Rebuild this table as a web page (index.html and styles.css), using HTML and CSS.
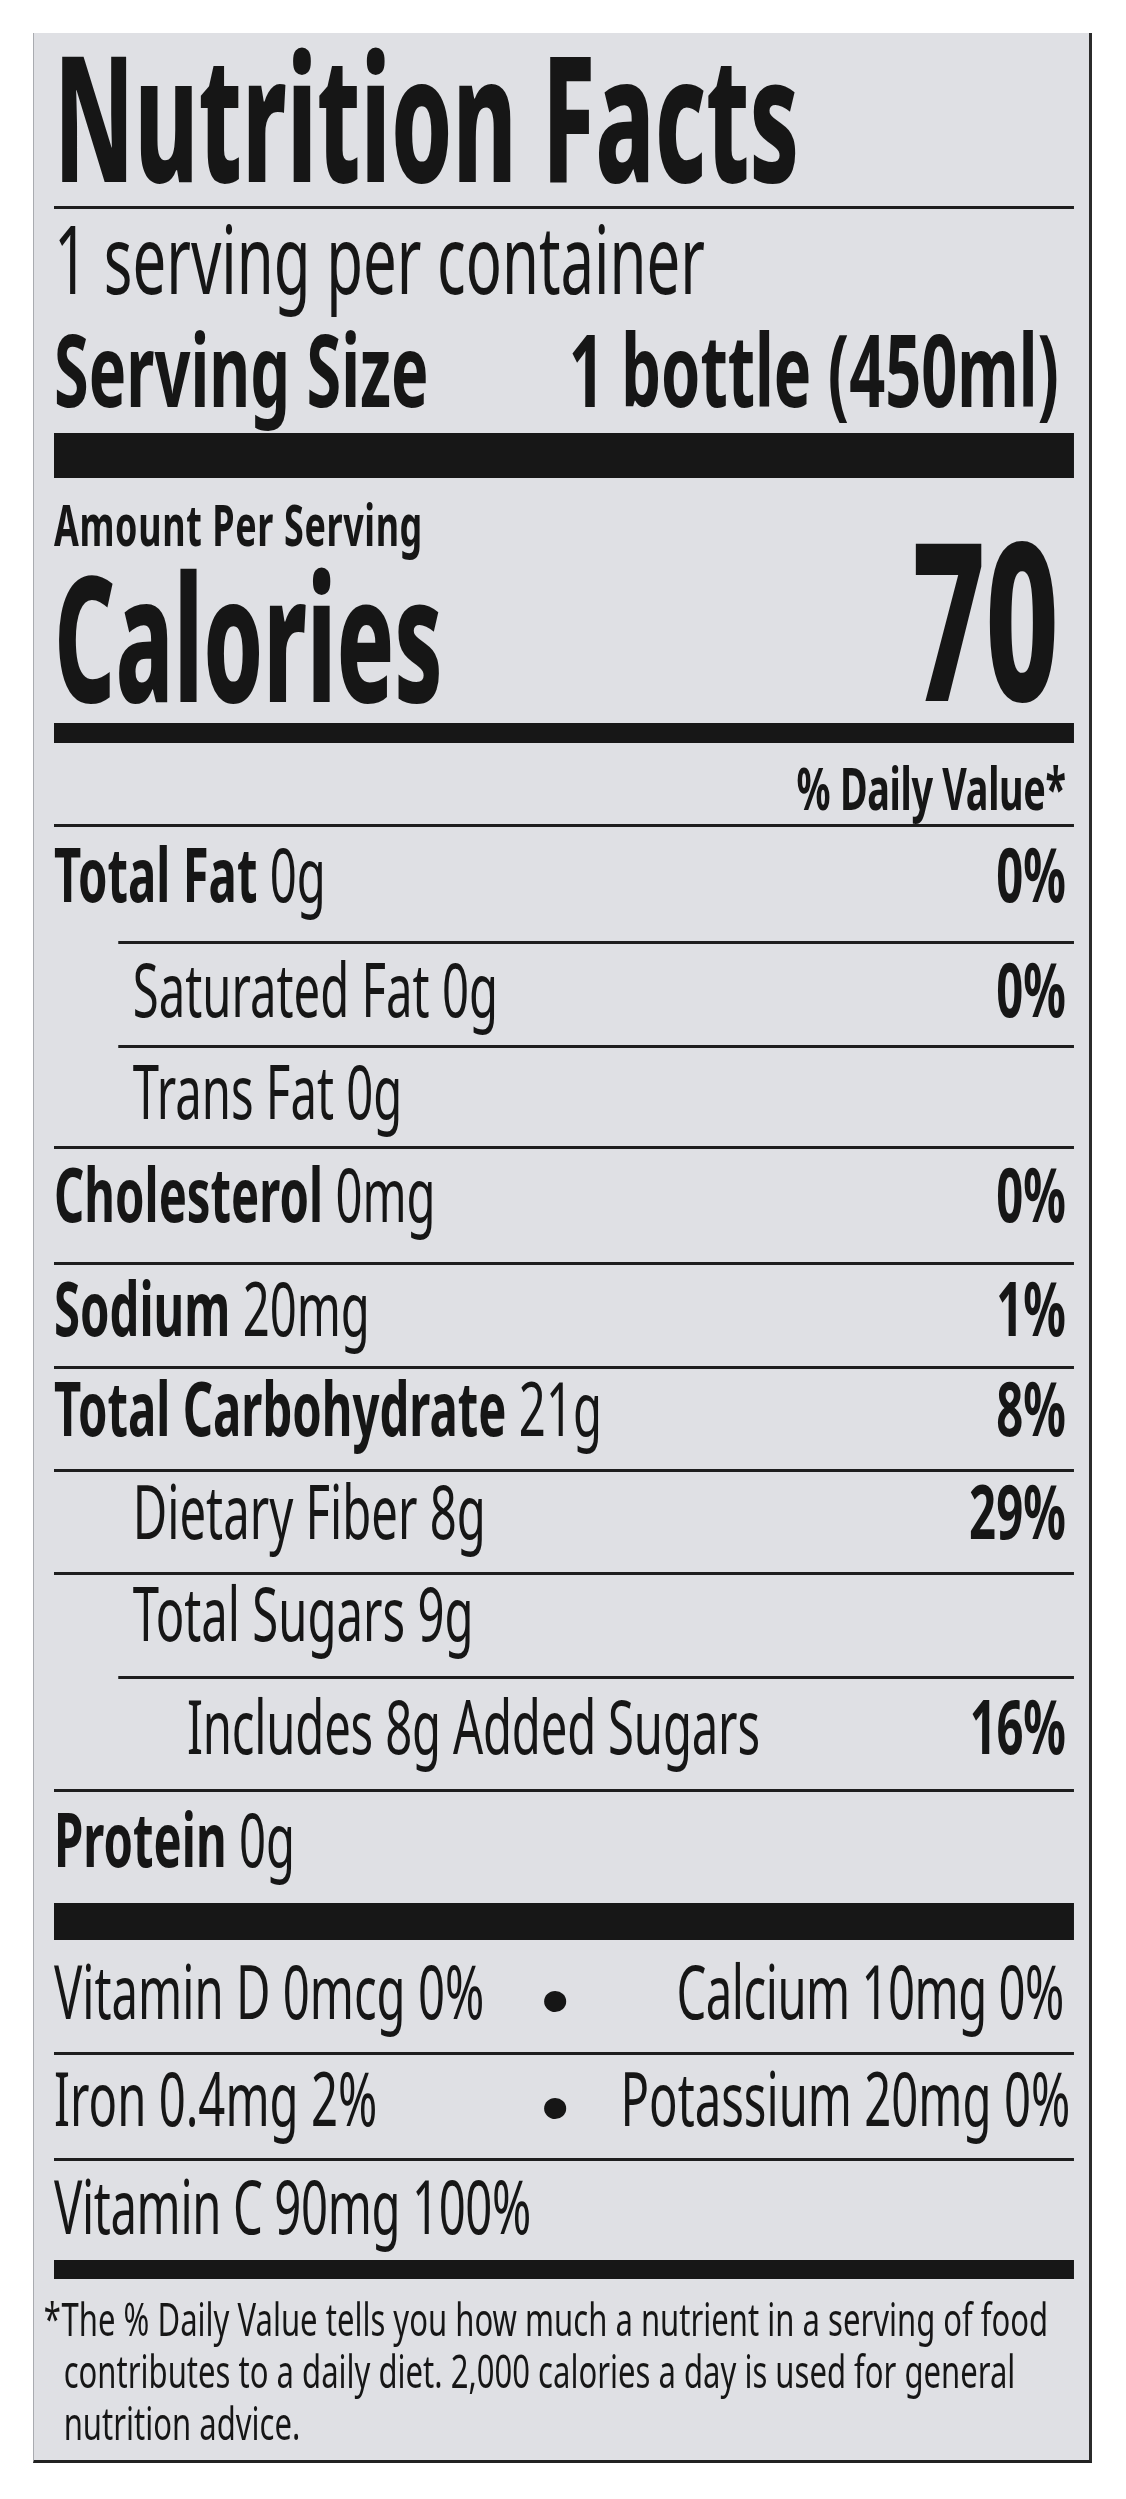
FILE: index.html
```html
<!DOCTYPE html>
<html lang="en">
<head>
<meta charset="utf-8">
<title>Nutrition Facts</title>
<link rel="stylesheet" href="styles.css">
</head>
<body>
<div class="label">
  <div class="inner">
    <h1 class="title"><span class="title-text">Nutrition Facts</span></h1>
    <div class="rule"></div>
    <div class="serving">
      <p class="servings">1 serving per container</p>
      <p class="size"><span>Serving Size</span><span>1 bottle (450ml)</span></p>
    </div>
    <div class="bar bar-lg"></div>
    <div class="calories">
      <div class="cal-left">
        <p class="amount">Amount Per Serving</p>
        <p class="cal-label"><span class="cal-text">Calories</span></p>
      </div>
      <p class="cal-value"><span class="cal-num">70</span></p>
    </div>
    <div class="bar bar-md"></div>
    <p class="dv-head">% Daily Value*</p>
    <div class="rule"></div>
    <div class="row row-fat"><span><b>Total Fat</b> 0g</span><b>0%</b></div>
    <div class="rule rule-indent"></div>
    <div class="row row-sat sub"><span>Saturated Fat 0g</span><b>0%</b></div>
    <div class="rule rule-indent"></div>
    <div class="row row-trans sub"><span>Trans Fat 0g</span></div>
    <div class="rule"></div>
    <div class="row row-chol"><span><b>Cholesterol</b> 0mg</span><b>0%</b></div>
    <div class="rule"></div>
    <div class="row row-sodium"><span><b>Sodium</b> 20mg</span><b>1%</b></div>
    <div class="rule"></div>
    <div class="row row-carb"><span><b>Total Carbohydrate</b> 21g</span><b>8%</b></div>
    <div class="rule"></div>
    <div class="row row-fiber sub"><span>Dietary Fiber 8g</span><b>29%</b></div>
    <div class="rule"></div>
    <div class="row row-sugars sub"><span>Total Sugars 9g</span></div>
    <div class="rule rule-indent"></div>
    <div class="row row-added subsub"><span>Includes 8g Added Sugars</span><b>16%</b></div>
    <div class="rule"></div>
    <div class="row row-protein"><span><b>Protein</b> 0g</span></div>
    <div class="bar bar-protein"></div>
    <div class="vit vit-d">
      <span class="vit-left">Vitamin D 0mcg 0%</span>
      <span class="dot"></span>
      <span class="vit-right">Calcium 10mg 0%</span>
    </div>
    <div class="rule"></div>
    <div class="vit vit-iron">
      <span class="vit-left">Iron 0.4mg 2%</span>
      <span class="dot"></span>
      <span class="vit-right vit-right-wide">Potassium 20mg 0%</span>
    </div>
    <div class="rule"></div>
    <div class="vit vit-c">
      <span class="vit-left vit-left-c">Vitamin C 90mg 100%</span>
    </div>
    <div class="bar bar-sm"></div>
    <p class="footnote"><span class="star">*</span>The % Daily Value tells you how much a nutrient in a serving of food<br>contributes to a daily diet. 2,000 calories a day is used for general<br>nutrition advice.</p>
  </div>
</div>
</body>
</html>
```

FILE: styles.css
```css
html, body {
  margin: 0;
  padding: 0;
  background: #ffffff;
}

body {
  height: 2499px;
  overflow: hidden;
}

.label {
  margin: 33px 0 0 33px;
  width: 1059px;
  height: 2430px;
  box-sizing: border-box;
  background: #dfe0e4;
  border-left: 1px solid #a9abb0;
  border-right: 3px solid #2b2b2b;
  border-bottom: 3px solid #222222;
  padding: 0 15px 0 20px;
  color: #161616;
  font-family: "Noto Sans", "Open Sans", sans-serif;
}

/* condensed type: the whole panel content is set wide and squeezed horizontally */
.inner {
  width: 1619px;
  transform: scaleX(0.63);
  transform-origin: 0 0;
}

.inner p { margin: 0; }
.inner b { font-weight: 700; }

.title {
  margin: 0;
  height: 173px;
  box-sizing: border-box;
  padding-top: 11px;
  font-size: 175px;
  font-weight: 800;
  line-height: 0.8;
  white-space: nowrap;
}

.title-text {
  display: inline-block;
  transform: scaleX(0.885);
  transform-origin: 0 0;
}

.rule {
  height: 3px;
  background: #1e1e1e;
}

.rule-indent { margin-left: 102px; }

.bar { background: #171717; }
.bar-lg { height: 45px; }
.bar-md { height: 20px; }
.bar-protein { height: 37px; }
.bar-sm { height: 19px; }

.serving {
  height: 224px;
}

.servings {
  padding-top: 7px;
  font-size: 95px;
  line-height: 0.88;
  font-weight: 400;
  white-space: nowrap;
}

.size {
  display: flex;
  justify-content: space-between;
  margin-top: 18px !important;
  padding-right: 24px;
  font-size: 100px;
  font-weight: 700;
  line-height: 1;
  white-space: nowrap;
}

.calories {
  display: grid;
  grid-template-columns: 1fr auto;
  height: 245px;
  box-sizing: border-box;
  padding-bottom: 19px;
}

.cal-left {
  display: flex;
  flex-direction: column;
}

.amount {
  padding-top: 18px;
  font-size: 57px;
  font-weight: 700;
  line-height: 1;
  letter-spacing: 1px;
  white-space: nowrap;
}

.cal-label {
  margin-top: 11px !important;
  font-size: 175px;
  font-weight: 800;
  line-height: 0.8;
  white-space: nowrap;
}

.cal-text {
  display: inline-block;
  transform: scaleX(0.865);
  transform-origin: 0 0;
}

.cal-value {
  align-self: end;
  padding-right: 24px;
  font-size: 220px;
  font-weight: 800;
  line-height: 0.8;
}

.cal-num {
  display: inline-block;
  transform: scaleX(0.92);
  transform-origin: 100% 0;
}

.dv-head {
  height: 81px;
  box-sizing: border-box;
  padding: 14px 13px 0 0;
  text-align: right;
  font-size: 60px;
  font-weight: 700;
  line-height: 1;
  letter-spacing: -0.5px;
}

.row {
  display: flex;
  justify-content: space-between;
  align-items: baseline;
  box-sizing: border-box;
  padding-right: 13px;
  font-size: 75px;
  line-height: 1;
  font-weight: 400;
  white-space: nowrap;
}

.sub { padding-left: 125px; }
.subsub { padding-left: 211px; letter-spacing: -0.3px; }

.row-fat { height: 114px; padding-top: 9px; }
.row-sat { height: 101px; padding-top: 7px; }
.row-trans { height: 98px; padding-top: 5px; }
.row-chol { height: 113px; padding-top: 7px; }
.row-sodium { height: 101px; padding-top: 5px; }
.row-carb { height: 100px; padding-top: 1px; }
.row-fiber { height: 100px; padding-top: 1px; }
.row-sugars { height: 101px; padding-top: 0; }
.row-added { height: 110px; padding-top: 9px; }
.row-protein { height: 111px; padding-top: 9px; }

.vit {
  display: grid;
  grid-template-columns: 778px 35px 1fr;
  align-items: end;
  align-content: start;
  box-sizing: border-box;
  font-size: 75px;
  line-height: 1;
  font-weight: 400;
  white-space: nowrap;
}

.vit-d { height: 112px; padding-top: 13px; }
.vit-iron { height: 103px; padding-top: 5px; }
.vit-c { height: 99px; padding-top: 7px; }

.vit-left-c { letter-spacing: -0.6px; }

.vit-right {
  text-align: right;
  padding-right: 16px;
  letter-spacing: -0.8px;
}

.vit-right-wide { padding-right: 6px; letter-spacing: 0; }

.dot {
  width: 35px;
  height: 21px;
  border-radius: 50%;
  background: #161616;
  margin-bottom: 16px;
}

.footnote {
  padding: 14px 0 0 14px;
  font-size: 45px;
  line-height: 52px;
  font-weight: 400;
  white-space: nowrap;
  transform: scaleX(1.095);
  transform-origin: 0 0;
}

.star {
  display: inline-block;
  width: 26px;
  margin-left: -29px;
}
```
